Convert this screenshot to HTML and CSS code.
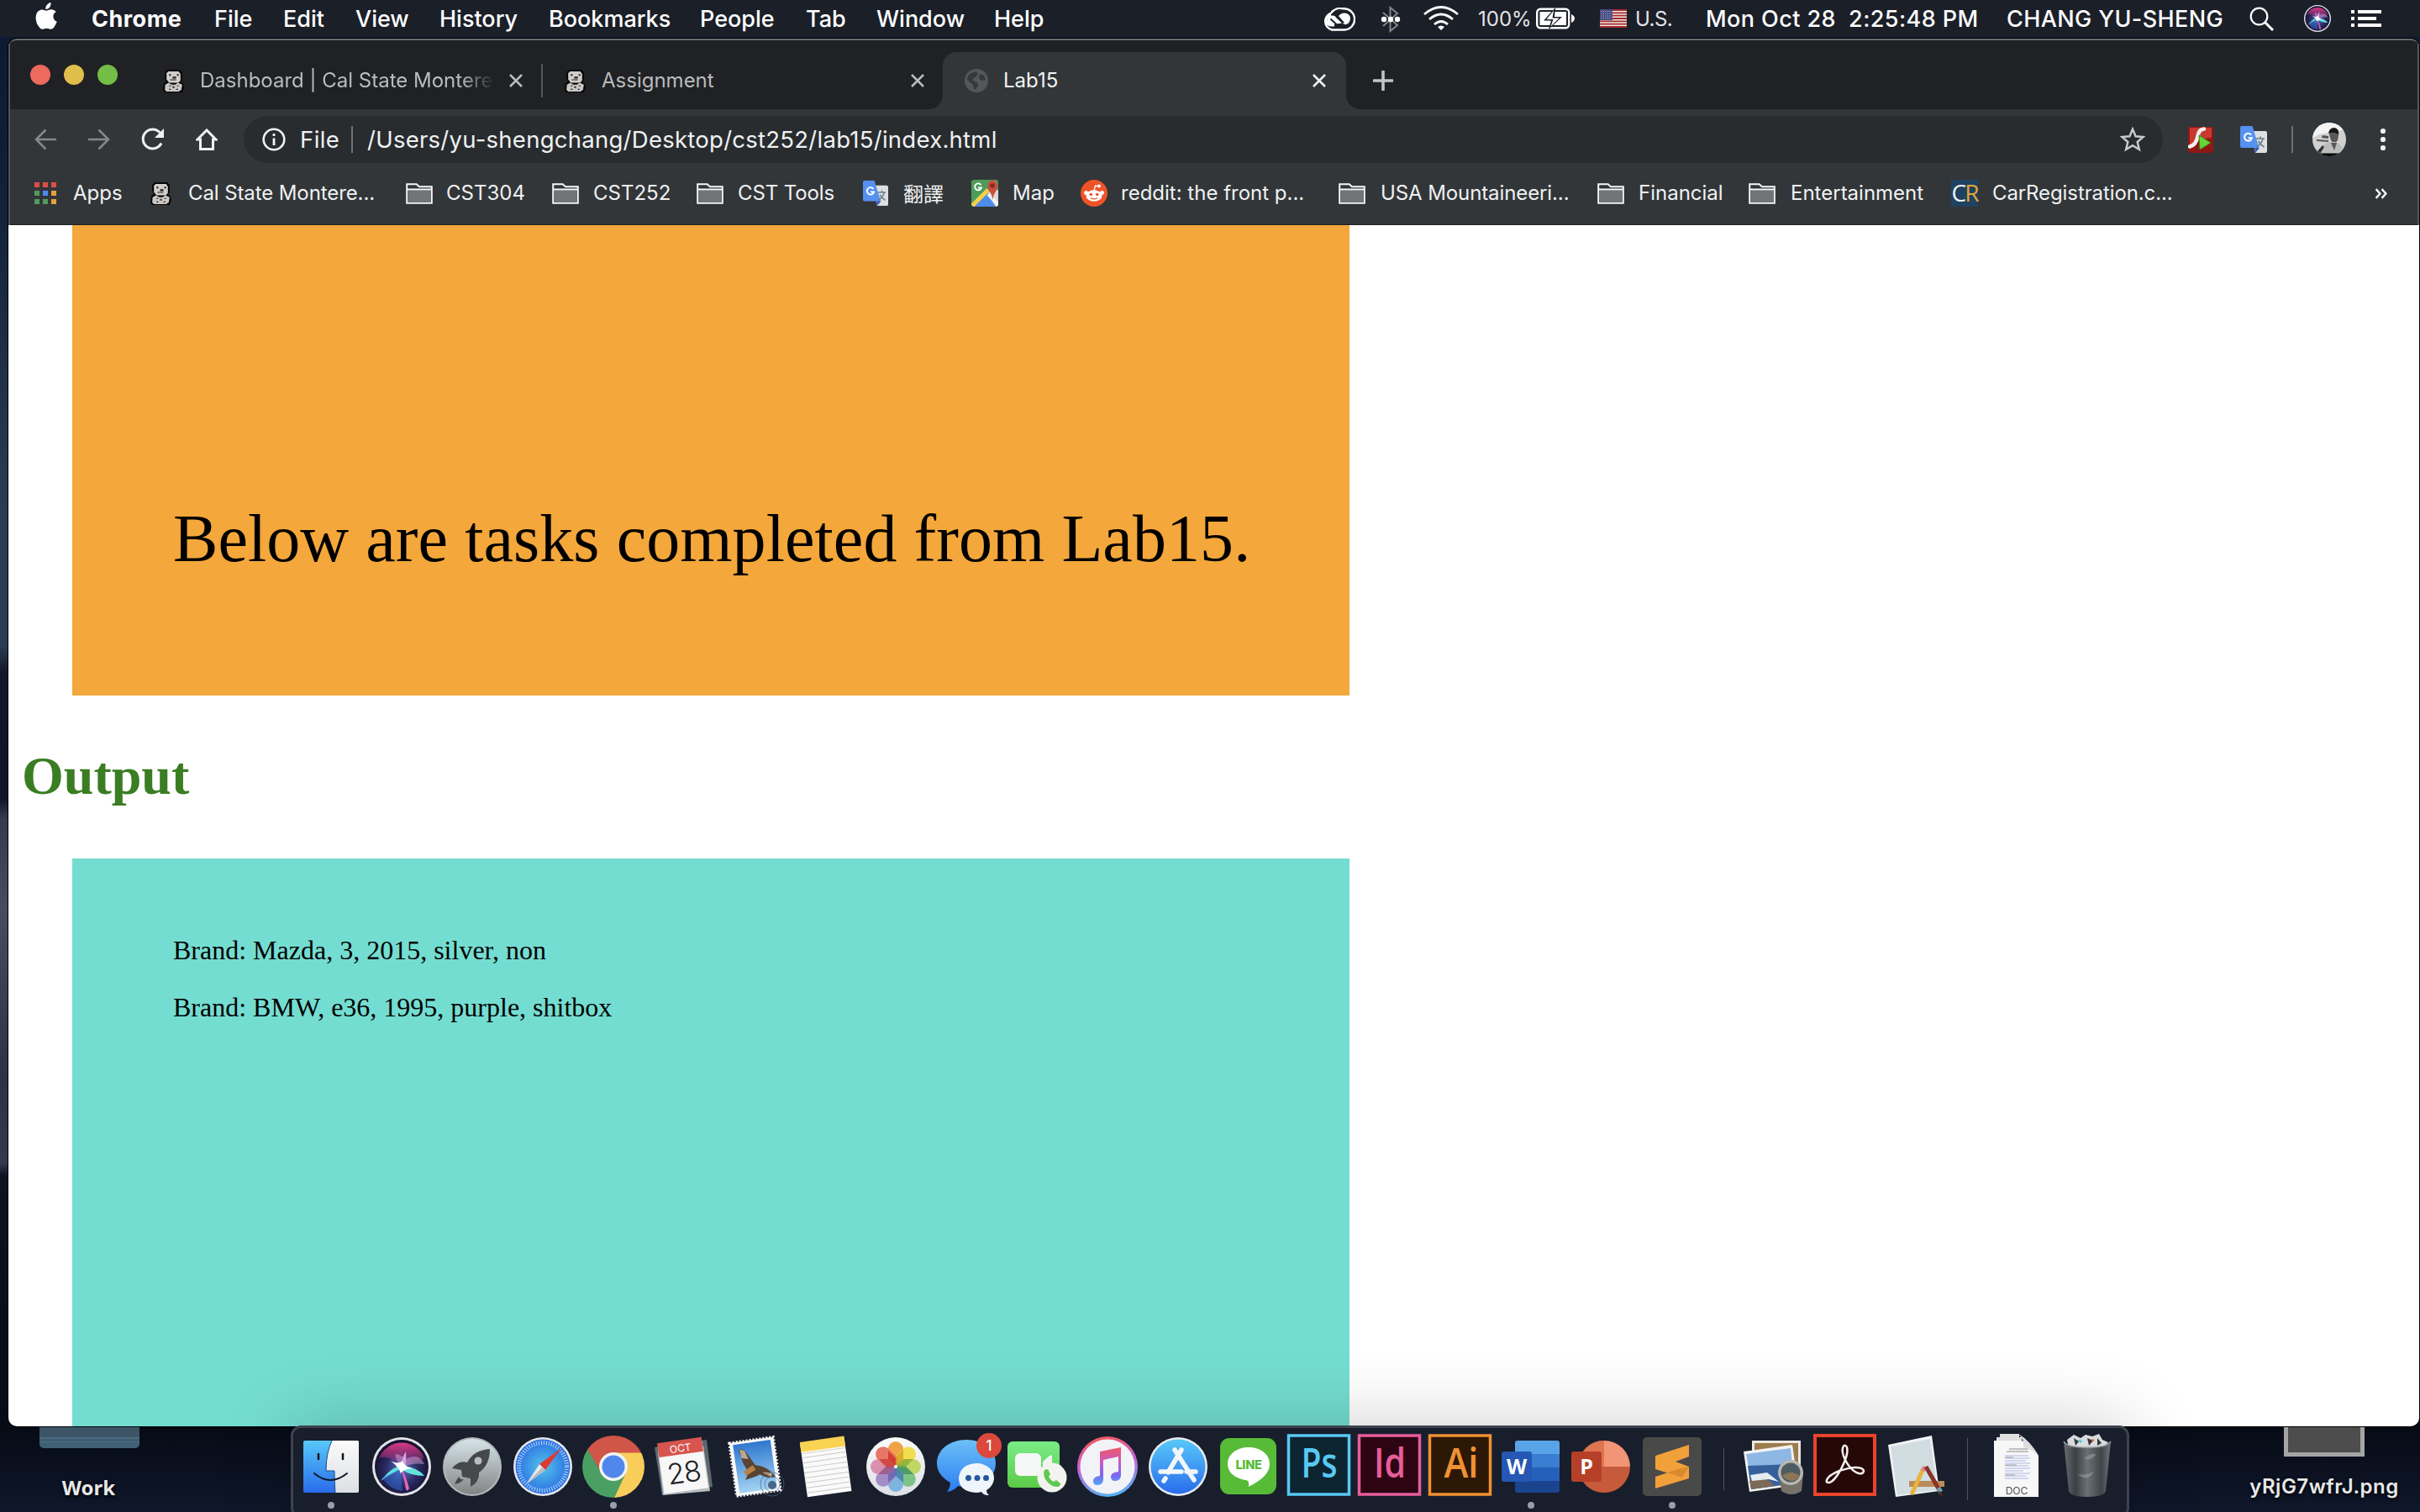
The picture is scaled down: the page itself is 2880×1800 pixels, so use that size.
FILE: index.html
```html
<!DOCTYPE html>
<html lang="en">
<head>
<meta charset="utf-8">
<title>Lab15</title>
<link rel="stylesheet" href="styles.css">
</head>
<body>
<svg class="defs" width="0" height="0" aria-hidden="true">
  <defs>
    <linearGradient id="gBlue" x1="0" y1="0" x2="0" y2="1"><stop offset="0" stop-color="#57c8f8"/><stop offset="1" stop-color="#2a6cec"/></linearGradient>
    <linearGradient id="gBubble" x1="0" y1="0" x2="0" y2="1"><stop offset="0" stop-color="#6cc0f6"/><stop offset="1" stop-color="#2c7df2"/></linearGradient>
    <linearGradient id="gWhite" x1="0" y1="0" x2="0" y2="1"><stop offset="0" stop-color="#fbfbfb"/><stop offset="1" stop-color="#dcdfe4"/></linearGradient>
    <linearGradient id="gGreen" x1="0" y1="0" x2="0" y2="1"><stop offset="0" stop-color="#79ec86"/><stop offset="1" stop-color="#5bcb48"/></linearGradient>
    <linearGradient id="gSilver" x1="0" y1="0" x2="0" y2="1"><stop offset="0" stop-color="#d5e4ea"/><stop offset="1" stop-color="#848484"/></linearGradient>
    <linearGradient id="gSky" x1="0" y1="0" x2="0" y2="1"><stop offset="0" stop-color="#2f78cf"/><stop offset="1" stop-color="#a4d3f3"/></linearGradient>
    <linearGradient id="gNote" x1="0" y1="0" x2="0" y2="1"><stop offset="0" stop-color="#ee5a62"/><stop offset=".4" stop-color="#c65ac8"/><stop offset=".75" stop-color="#7768f2"/><stop offset="1" stop-color="#55a8f5"/></linearGradient>
    <linearGradient id="gRing" x1=".4" y1="0" x2=".6" y2="1"><stop offset="0" stop-color="#f2585c"/><stop offset=".45" stop-color="#c862d8"/><stop offset="1" stop-color="#52b6f5"/></linearGradient>
    <linearGradient id="gTrash" x1="0" y1="0" x2="1" y2="0"><stop offset="0" stop-color="#6f7579"/><stop offset=".25" stop-color="#3d4246"/><stop offset=".5" stop-color="#73787b"/><stop offset=".8" stop-color="#43484c"/><stop offset="1" stop-color="#777c80"/></linearGradient>
    <radialGradient id="gSafari"><stop offset="0" stop-color="#54c3e8"/><stop offset="1" stop-color="#2b70e4"/></radialGradient>
    <radialGradient id="gSiri" cx=".5" cy=".55" r=".55"><stop offset="0" stop-color="#5a6fc0"/><stop offset=".55" stop-color="#2b2a63"/><stop offset="1" stop-color="#120f2b"/></radialGradient>
    <linearGradient id="gPink" x1="0" y1="0" x2="0" y2="1"><stop offset="0" stop-color="#d73a86"/><stop offset="1" stop-color="#d73a86" stop-opacity="0"/></linearGradient>
  </defs>

  <symbol id="otter" viewBox="0 0 24 26">
    <path d="M5 0h14l3 3v9l-2 2 3 2 1 4-2 6H2l-2-3 1-7 3-3-2-3V3z" fill="#050505"/>
    <path d="M6 2h12l2 3v7l-2 3H7l-3-4V4z" fill="#d0cdcb"/>
    <path d="M2.500 17l4-2 3.500 2h4l3-2 5 2-1 6-3 2H4l-2-2z" fill="#c9c6c4"/>
    <path d="M7 5h2v2H7zM16 5h2v2h-2zM11 8h4v2h-4zM8 11h7v1H8zM7 18h2v1H7zM11 19h2v2h-2zM16 18h2v1h-2zM7 22h2v1H7zM15 22h2v1h-2z" fill="#202020"/>
  </symbol>
  <symbol id="folder" viewBox="0 0 32 25">
    <path d="M1.200 23.800V1.200h11.500l3.200 3H30.800v19.600z" fill="#333639" stroke="#f6f6f7" stroke-width="2"/>
    <path d="M2.200 8.500h27.600v14.300H2.200z" fill="#727477"/><path d="M1 7.500h30" stroke="#f6f6f7" stroke-width="1.800"/>
  </symbol>
  <symbol id="translate" viewBox="0 0 32 32">
    <path d="M13 6h17a2 2 0 0 1 2 2v22a2 2 0 0 1-2 2H18z" fill="#dedfe0"/>
    <path d="M18 32l5-6-6-2z" fill="#3656c4"/>
    <path d="M2 0h12.500l8 26H2a2 2 0 0 1-2-2V2a2 2 0 0 1 2-2z" fill="#5690f0"/>
    <path d="M19 15h10M24 12.500v2.500M27 15q-2 7-7.500 10M21.500 18q2 4 7 7" fill="none" stroke="#68838a" stroke-width="1.700"/>
    <path d="M13.300 10.600A4.500 4.500 0 1 0 14 14.200H9.600" fill="none" stroke="#fff" stroke-width="2"/>
  </symbol>
  <symbol id="cross" viewBox="0 0 18 18"><path d="M2 2l14 14M16 2L2 16" stroke="currentColor" stroke-width="2.500"/></symbol>
  <symbol id="siri" viewBox="0 0 70 70">
    <circle cx="35" cy="35" r="35" fill="#e4e3e6"/><circle cx="35" cy="35" r="32" fill="url(#gSiri)"/>
    <path d="M8 25A29 29 0 0 1 62 25Q48 30 35 36Q20 20 8 25z" fill="url(#gPink)"/>
    <path d="M35 37Q18 10 40 26Q56 18 62 32Q46 30 35 37z" fill="#d5a1d8" opacity=".5"/>
    <path d="M10 52Q24 34 36 34Q54 36 62 46Q46 46 34 38Q22 44 10 52z" fill="#62e3dc"/>
    <path d="M34 35Q40 46 44 61Q40 68 39 55z" fill="#ee65b8"/>
    <path d="M36 35Q34 26 40 17Q41 28 39 35z" fill="#d9a2e8"/>
    <path d="M12 48Q20 62 36 64L33 38z" fill="#2f6bd0" opacity=".55"/>
    <path d="M22 28Q31 33 36 28Q38 35 48 37Q37 38 34 43Q32 36 22 28z" fill="#fff"/>
  </symbol>
</svg>

<main class="desktop">
  <header class="menubar">
    <svg class="i-apple" viewBox="0 0 26 32"><path d="M18.500 0q.5 4-1.800 6.200-2 2-4.400 1.800-.3-3.200 1.800-5.500Q16 .4 18.500 0zM24.800 11q-3.500 2-3.400 5.700.2 4.300 4.300 6-1.200 3.800-3.800 7.200-2.200 2.600-5 1.500-3.500-1.500-6.900 0-2.600 1-4.600-1.200Q.3 24.500.6 17.500.9 10.300 6.400 8.700q2.200-.6 4.800.6 1.900.8 3.700 0 6.100-2.500 9.900 1.700z" fill="#fff"/></svg>
    <b class="mb-app">Chrome</b><span>File</span><span>Edit</span><span>View</span><span>History</span><span>Bookmarks</span><span>People</span><span>Tab</span><span>Window</span><span>Help</span>
    <svg class="i-cc" viewBox="0 0 40 28"><path d="M12 26.500A10.500 10.500 0 0 1 11 6.500 14 14 0 0 1 26 1.300 12.500 12.500 0 0 1 27 26.500z" fill="none" stroke="#fff" stroke-width="2.400"/><path d="M11.500 20.500A5.500 5.500 0 0 1 12 9.500q3-.5 5.500 2L25 19q5 3 8-2 3-7-3-10-6-2-10 3l7 8" fill="#fff"/><path d="M10.500 13.500l8 7.500M17 10.500l8.500 8" stroke="#1b1f28" stroke-width="2"/><path d="M11 9a6 6 0 0 0 0 12h4" fill="none" stroke="#fff" stroke-width="3"/></svg>
    <svg class="i-bt" viewBox="0 0 24 32"><path d="M3 8l17 15-8.500 7V2L20 9 3 24" fill="none" stroke="#84868b" stroke-width="2"/><circle cx="4" cy="16" r="3.200" fill="#fff"/><circle cx="12" cy="16" r="3.200" fill="#fff"/><circle cx="20" cy="16" r="3.200" fill="#fff"/></svg>
    <svg class="i-wifi" viewBox="0 0 42 30"><g fill="none" stroke="#fff" stroke-width="2.700"><path d="M1 10Q21-7 41 10M7 16Q21 4 35 16M13 22Q21 15 29 22"/></g><path d="M17 25q4-3 8 0l-4 4z" fill="#fff"/></svg>
    <span class="mb-small">100%</span>
    <svg class="i-batt" viewBox="0 0 46 26"><rect x="1.200" y="1.800" width="38" height="22.400" rx="4" fill="none" stroke="#fff" stroke-width="2.400"/><rect x="4.500" y="5" width="31.500" height="16" fill="#fff"/><path d="M23 0L9 15.500h9L15 26 31 11h-9z" fill="#1b1f28"/><path d="M21 3.500L12.500 14h8L17.500 22.500 27.500 12.500h-8z" fill="#fff"/><path d="M42 8q4 2 4 5t-4 5z" fill="#fff"/></svg>
    <svg class="i-flag" viewBox="0 0 32 22"><path fill="#efe9e9" d="M0 0h32v22H0z"/><path d="M0 1h32M0 4.300h32M0 7.600h32M0 11h32M0 14.300h32M0 17.600h32M0 21h32" stroke="#a52a2b" stroke-width="1.800"/><path fill="#464a80" d="M0 0h15v13H0z"/><path d="M1.500 2.500h13M1.500 5.200h13M1.500 8h13M1.500 10.700h13" stroke="#c9cbe0" stroke-width="1" stroke-dasharray="1 1.500"/></svg>
    <span class="mb-small mb-us">U.S.</span>
    <span class="mb-date">Mon Oct 28&nbsp; 2:25:48 PM</span>
    <span class="mb-user">CHANG YU-SHENG</span>
    <svg class="i-search" viewBox="0 0 30 30"><circle cx="11.500" cy="11.500" r="9.800" fill="none" stroke="#fff" stroke-width="2.200"/><path d="M18.500 18.500L28 28" stroke="#fff" stroke-width="3"/></svg>
    <svg class="i-siri"><use href="#siri"/></svg>
    <svg class="i-list" viewBox="0 0 36 20"><path d="M0 2h4M8 2h28M0 10h4M8 10h22M0 18h4M8 18h28" stroke="#fff" stroke-width="4"/></svg>
  </header>

  <section class="window">
    <div class="chrome">
      <div class="tabstrip">
        <div class="lights"><i class="light red"></i><i class="light yellow"></i><i class="light green"></i></div>
        <div class="tab tab-first"><svg class="fav"><use href="#otter"/></svg><span class="title fade">Dashboard | Cal State Monterey</span><svg class="close"><use href="#cross"/></svg><i class="tabsep"></i></div>
        <div class="tab tab-second"><svg class="fav"><use href="#otter"/></svg><span class="title">Assignment</span><svg class="close"><use href="#cross"/></svg></div>
        <div class="tab tab-active"><svg class="globe" viewBox="0 0 28 28"><circle cx="14" cy="14" r="14" fill="#54565a"/><path d="M8 5q5-3 8 0l-2 4-4 2v3l5 2 1 4-3 5q-3-1-3-6l-5-4-2-3q1-5 5-7zM18 6l5 2 2 5-5 1-3-3z" fill="#36393c"/></svg><span class="title">Lab15</span><svg class="close"><use href="#cross"/></svg></div>
        <svg class="plus" viewBox="0 0 24 24"><path d="M12 1v22M1 12h22" stroke="#c3c4c7" stroke-width="3.600" stroke-linecap="round"/></svg>
      </div>

      <div class="toolbar">
        <svg class="ic26 dim" viewBox="0 0 26 26"><path d="M26 13H2M13.500 1.500L2 13l11.500 11.500" fill="none" stroke="currentColor" stroke-width="2.500"/></svg>
        <svg class="ic26 dim" viewBox="0 0 26 26"><path d="M0 13h24M12.500 1.500L24 13 12.500 24.500" fill="none" stroke="currentColor" stroke-width="2.500"/></svg>
        <svg class="ic28" viewBox="0 0 28 28"><path d="M24 18.500A11.500 11.500 0 1 1 22.500 6" fill="none" stroke="currentColor" stroke-width="3"/><path d="M27 1v11H16z" fill="currentColor"/></svg>
        <svg class="ic26 home" viewBox="0 0 26 26"><path d="M5.500 13v11.500h15V13h3.500L13 2 2 13z" fill="none" stroke="currentColor" stroke-width="3"/></svg>
        <div class="omnibox">
          <svg class="info" viewBox="0 0 28 28"><circle cx="14" cy="14" r="12.300" fill="none" stroke="currentColor" stroke-width="2.600"/><path d="M14 12.500V21M14 7v3" stroke="currentColor" stroke-width="2.800"/></svg>
          <span class="scheme">File</span><i class="omnisep"></i><span class="url">/Users/yu-shengchang/Desktop/cst252/lab15/index.html</span>
          <svg class="star" viewBox="0 0 28 28"><path d="M14 2.500l3.300 8 8.500.7-6.500 5.600 2 8.400-7.300-4.500-7.300 4.500 2-8.400-6.500-5.600 8.500-.7z" fill="none" stroke="#c9cbce" stroke-width="2.300"/></svg>
        </div>
        <svg class="flash" viewBox="0 0 30 31"><rect width="30" height="31" rx="3" fill="#8f1713"/><path d="M2 1h26v12Q12 14 2 24z" fill="#c8382f"/><path d="M19 2.500q-6 0-7.500 8.500-2 11-9.500 12.500" fill="none" stroke="#f4eeee" stroke-width="4.500" stroke-linecap="round"/><path d="M13 10l14 9-13 8z" fill="#66d636" stroke="#338a1b" stroke-width="1"/></svg>
        <svg class="ic32"><use href="#translate"/></svg>
        <i class="barsep"></i>
        <svg class="avatar" viewBox="0 0 40 40"><clipPath id="av"><circle cx="20" cy="20" r="20"/></clipPath><g clip-path="url(#av)"><path fill="#d0d0d0" d="M0 0h40v40H0z"/><path d="M0 0h40v8L8 14 0 18z" fill="#f3f3f3"/><path d="M5 20l14 1v2L5 22zM12 15l7 1v3l-8-1z" fill="#555"/><path d="M20 14q0-7 6-7t5 8l-1 6q-4 6-8 0z" fill="#5b5755"/><path d="M19 13q1-7 7-7 6 1 5 8-6-4-12-1z" fill="#161616"/><path d="M8 38q3-14 14-15h5q9 2 10 15z" fill="#bcbcbc"/><path d="M22 24l4 9 3-9z" fill="#5b5755"/><path d="M6 34l6-7 2 2-5 8z" fill="#333"/><path d="M0 36.500h40V40H0z" fill="#050505"/></g></svg>
        <svg class="dots" viewBox="0 0 10 28"><g fill="#f1f2f3"><circle cx="5" cy="4" r="3.100"/><circle cx="5" cy="14" r="3.100"/><circle cx="5" cy="24" r="3.100"/></g></svg>
      </div>

      <nav class="bookmarks">
        <svg class="apps" viewBox="0 0 26 27"><g><path fill="#dd4f43" d="M0 0h6v6H0zM10 0h6v6h-6zM20 0h6v6h-6z"/><path fill="#539a5e" d="M0 10h6v6H0zM0 20h6v6H0zM10 20h6v6h-6z"/><path fill="#4a8af0" d="M10 10h6v6h-6z"/><path fill="#e5a23a" d="M20 10h6v6h-6zM20 20h6v6h-6z"/></g></svg><span>Apps</span>
        <svg class="fav"><use href="#otter"/></svg><span class="tight">Cal State Montere...</span>
        <svg class="fold"><use href="#folder"/></svg><span>CST304</span>
        <svg class="fold"><use href="#folder"/></svg><span>CST252</span>
        <svg class="fold"><use href="#folder"/></svg><span class="tight">CST Tools</span>
        <svg class="ic30"><use href="#translate"/></svg><span>翻譯</span>
        <svg class="ic32" viewBox="0 0 32 32"><clipPath id="mp"><rect width="32" height="32" rx="3"/></clipPath><g clip-path="url(#mp)"><path fill="#4d9c5b" d="M0 0h32v32H0z"/><path fill="#d9dadb" d="M20 15l12-3v20H22z"/><path fill="#4f8bec" d="M3 32l16-15 10 15z"/><path d="M1 31L20 12" stroke="#f5d04d" stroke-width="5"/><path d="M20 17l12 13" stroke="#f3f3f3" stroke-width="4"/></g><path d="M25 24q0-6-4-11-5-9 4-13 9 4 5 12-4 6-5 12z" fill="#cf4b3e"/><circle cx="25" cy="7" r="2.800" fill="#792f28"/><path d="M11.500 6.200A4 4 0 1 0 12 9.500H8" fill="none" stroke="#fff" stroke-width="1.800"/></svg><span>Map</span>
        <svg class="ic32" viewBox="0 0 32 32"><circle cx="16" cy="16" r="16" fill="#ee5428"/><ellipse cx="16" cy="19" rx="9.500" ry="6.800" fill="#fff"/><circle cx="6.500" cy="15.500" r="2.500" fill="#fff"/><circle cx="25.500" cy="15.500" r="2.500" fill="#fff"/><circle cx="22" cy="7.500" r="2" fill="#fff"/><path d="M16 13l1.500-6 4 1" fill="none" stroke="#fff" stroke-width="1.300"/><circle cx="12.300" cy="17.500" r="1.800" fill="#ee5428"/><circle cx="19.700" cy="17.500" r="1.800" fill="#ee5428"/><path d="M12 21.700q4 2.500 8 0" fill="none" stroke="#ee5428" stroke-width="1.200"/></svg><span>reddit: the front p...</span>
        <svg class="fold"><use href="#folder"/></svg><span class="tight">USA Mountaineeri...</span>
        <svg class="fold"><use href="#folder"/></svg><span>Financial</span>
        <svg class="fold"><use href="#folder"/></svg><span>Entertainment</span>
        <span class="cr"><i>C</i><b>R</b></span><span class="tight">CarRegistration.c...</span>
        <svg class="more" viewBox="0 0 14 12"><path d="M1.500 1l4.500 5-4.500 5M8 1l4.500 5L8 11" fill="none" stroke="#f4f4f5" stroke-width="2.300"/></svg>
      </nav>
    </div>

    <article class="page">
      <div class="intro"><p>Below are tasks completed from Lab15.</p></div>
      <h1>Output</h1>
      <div class="output"><p>Brand: Mazda, 3, 2015, silver, non</p><p>Brand: BMW, e36, 1995, purple, shitbox</p></div>
    </article>
  </section>

  <figure class="file work"><i class="folder-art"></i><figcaption>Work</figcaption></figure>
  <figure class="file png"><i class="thumb-art"></i><figcaption>yRjG7wfrJ.png</figcaption></figure>

  <footer class="dock">
    <svg class="app" viewBox="0 0 84 100"><rect x="9" y="15" width="66" height="62" rx="2" fill="url(#gBlue)"/><path d="M43 15h30q2 0 2 2v58q0 2-2 2H47q-1-12-1-26H36q0-22 7-36z" fill="url(#gWhite)"/><path d="M43 15q-7 15-7 36h10q0 14 1 26" fill="none" stroke="#1c4c80" stroke-width="1"/><path d="M27 31v6M56 31v6" stroke="#111820" stroke-width="2.600" stroke-linecap="round"/><path d="M22 54Q41 70 61 54" fill="none" stroke="#0c1626" stroke-width="2" stroke-linecap="round"/><circle class="dot" cx="42" cy="92" r="4"/></svg>
    <svg class="app" viewBox="0 0 84 100"><use href="#siri" x="7" y="11" width="70" height="70"/></svg>
    <svg class="app" viewBox="0 0 84 100"><circle cx="42" cy="46" r="35" fill="#b3b9bb"/><circle cx="42" cy="46" r="33" fill="url(#gSilver)"/><path d="M63 25Q44 26 36 41Q26 38 18 48L29 50 30 58 40 60 40 70Q51 64 50 53Q63 44 63 25zM26 58Q23 62 21 67Q28 66 32 61Q28 62 26 58z" fill="#45494b"/><circle cx="49" cy="39" r="4.500" fill="#b6bfc2"/></svg>
    <svg class="app" viewBox="0 0 84 100"><circle cx="42" cy="46" r="35" fill="#e7e9eb"/><circle cx="42" cy="46" r="32.500" fill="url(#gSafari)"/><circle cx="42" cy="46" r="28.500" fill="none" stroke="#bfdcf6" stroke-width="5" stroke-dasharray="1 2"/><path d="M64 24L38 43l7 7z" fill="#dd3a31"/><path d="M22 67l16-24 7 7z" fill="#e9eaeb"/><path d="M22 67l19.500-20.500L45 50z" fill="#b9bcc0"/></svg>
    <svg class="app" viewBox="0 0 84 100"><clipPath id="ch"><circle cx="42" cy="46" r="37"/></clipPath><g clip-path="url(#ch)"><path d="M0 0h84v30H42L28 54 0 10z" fill="#cf5648"/><path d="M0 0v100h41L56 54 28 54 11 25z" fill="#4b9f63"/><path d="M84 29.500H42L57 53 40 90h44z" fill="#f9cd5a"/></g><circle cx="42" cy="46" r="17" fill="#f3f3f1"/><circle cx="42" cy="46" r="13.500" fill="#4f87ec"/><circle class="dot" cx="42" cy="92" r="4"/></svg>
    <svg class="app" viewBox="0 0 84 100"><path d="M7 23l62-9 7 56-60 10z" fill="#5d686e"/><path d="M11 30l54-9 8 54-56 5z" fill="#b9bdbf"/><g transform="rotate(-8 42 44)"><path d="M14 18h53v57H14z" fill="#f7f7f7"/><path d="M14 14h53v17H14z" fill="#d6554e"/><text class="cal-m" x="40.500" y="28">OCT</text><text class="cal-d" x="40.500" y="65">28</text></g></svg>
    <svg class="app" viewBox="0 0 84 100"><g transform="rotate(-8 42 46)"><rect x="16" y="14" width="53" height="64" fill="#f8f8f8" stroke="#f8f8f8" stroke-width="3" stroke-dasharray="2 2"/><rect x="20" y="17" width="45" height="58" fill="url(#gSky)"/><path d="M26 23q4-1 8 4l9 17 8 3q9 5 14 14-10 2-18-5l-6 2-12 2 5-8-5-12z" fill="#5a4331"/><path d="M27 23l6 3 3 10-8-2zM50 54l12 2-2 5z" fill="#bba692"/><path d="M28 50l12-6 3 6-12 5z" fill="#b68246"/></g><g fill="none" stroke="#4d6685" opacity=".7"><circle cx="63" cy="67" r="14"/><circle cx="63" cy="67" r="9"/></g><circle cx="63" cy="68" r="5" fill="#486789"/></svg>
    <svg class="app" viewBox="0 0 84 100"><g transform="rotate(-8 42 45)"><path d="M16 15h53v64H16z" fill="#fafafa"/><path d="M16 13h53v12H16z" fill="#f9d252"/><path d="M16 32h53M16 38h53M16 44h53M16 50h53M16 56h53M16 62h53M16 68h53M16 74h53" stroke="#c9c9c9"/><path d="M16 27h53" stroke="#b2a883" stroke-dasharray="1 1"/></g></svg>
    <svg class="app" viewBox="0 0 84 100"><circle cx="42" cy="46" r="35" fill="url(#gWhite)"/><g opacity=".9"><rect x="33" y="16" width="18" height="30" rx="9" fill="#ef9a35"/><rect x="33" y="16" width="18" height="30" rx="9" fill="#f1dc3f" transform="rotate(45 42 46)"/><rect x="33" y="16" width="18" height="30" rx="9" fill="#bdd454" transform="rotate(90 42 46)"/><rect x="33" y="16" width="18" height="30" rx="9" fill="#72bf7c" transform="rotate(135 42 46)"/><rect x="33" y="16" width="18" height="30" rx="9" fill="#73b0df" transform="rotate(180 42 46)"/><rect x="33" y="16" width="18" height="30" rx="9" fill="#9d84c4" transform="rotate(225 42 46)"/><rect x="33" y="16" width="18" height="30" rx="9" fill="#d887aa" transform="rotate(270 42 46)"/><rect x="33" y="16" width="18" height="30" rx="9" fill="#e7695a" transform="rotate(315 42 46)"/></g><g opacity=".75"><path d="M42 46L33 37V27l9 9z" fill="#cf2d1e"/><path d="M42 46V34l9-9v12z" fill="#d99a22"/><path d="M42 46l9-9h12l-9 9z" fill="#8aa92a"/><path d="M42 46h12l9 9H51z" fill="#3e8f56"/><path d="M42 46l9 9v10l-9-8z" fill="#3a7a9a"/><path d="M42 46l-9 9v10l9-8z" fill="#5862ad"/><path d="M42 46H30l-9 9h12z" fill="#8e4f86"/><path d="M42 46l-9-9H22l9 9z" fill="#c83a3e"/></g><circle cx="42" cy="46" r="2" fill="#fff"/></svg>
    <svg class="app" viewBox="0 0 84 100"><path d="M42 14C62 14 77 26 77 42S62 70 42 70q-6 0-10-1-5 6-13 7 4-5 4-11Q7 56 7 42C7 26 22 14 42 14z" fill="url(#gBubble)"/><path d="M54 42c12 0 21 8 21 17 0 7-4 12-9 15 0 3 1 4 3 6-5 0-7-1-9-4q-3 1-6 1-21-1-21-18 2-16 21-17z" fill="#eef5fb"/><g fill="#23599c"><circle cx="44.500" cy="59.500" r="3.500"/><circle cx="55" cy="59.500" r="3.500"/><circle cx="65.500" cy="59.500" r="3.500"/></g><circle cx="69" cy="21" r="15" fill="#dc493c"/><text class="badge" x="69" y="27">1</text></svg>
    <svg class="app" viewBox="0 0 84 100"><rect x="7" y="16" width="62" height="55" rx="6" fill="url(#gGreen)"/><rect x="16" y="30" width="31" height="27" rx="6" fill="#f6f7f7"/><path d="M49 40l8-7q3-2 3 1v24l-11-9z" fill="#f0f2f0"/><circle cx="60" cy="59" r="17.500" fill="#f2f3ef"/><path d="M51 50l4-1 3 6-2 3q2 4 6 6l3-2 5 4q0 4-4 4-8 0-14-9-3-6-1-11z" fill="#5ec84f"/></svg>
    <svg class="app" viewBox="0 0 84 100"><circle cx="42" cy="46" r="36" fill="url(#gRing)"/><circle cx="42" cy="46" r="32.500" fill="#f2f3f7"/><path d="M33 28l25-5v33q0 7-7 7-5 0-5-5t9-6V34l-18 4v23q0 7-7 7-5 0-5-5t8-6z" fill="url(#gNote)"/></svg>
    <svg class="app" viewBox="0 0 84 100"><circle cx="42" cy="46" r="35" fill="#e9ecef"/><circle cx="42" cy="46" r="32.500" fill="url(#gBlue)"/><g stroke="#f2f6fb" stroke-width="5.500" stroke-linecap="round"><path d="M38 26l23 36M46 26L30 53M27 60l-2 3M21 52h25M52 52h11"/></g></svg>
    <svg class="app" viewBox="0 0 84 100"><rect x="8" y="12" width="67" height="67" rx="11" fill="#57bb37"/><path d="M42 23c14 0 25 8 25 20 0 13-14 21-25 27 1-6-1-8-4-8-12-2-21-9-21-19 0-12 11-20 25-20z" fill="#fff"/><text class="line" x="42" y="49">LINE</text></svg>
    <svg class="app" viewBox="0 0 84 100"><path d="M5.500 9h72v70h-72z" fill="#0c2530" stroke="#57c9f3" stroke-width="3.500"/><text class="adobe ps" x="42" y="59" textLength="43" lengthAdjust="spacingAndGlyphs">Ps</text></svg>
    <svg class="app" viewBox="0 0 84 100"><path d="M5.500 9h72v70h-72z" fill="#2d0512" stroke="#e75d9a" stroke-width="3.500"/><text class="adobe id" x="42" y="59" textLength="38" lengthAdjust="spacingAndGlyphs">Id</text></svg>
    <svg class="app" viewBox="0 0 84 100"><path d="M5.500 9h72v70h-72z" fill="#2d1705" stroke="#ee9132" stroke-width="3.500"/><text class="adobe ai" x="43" y="59" textLength="41" lengthAdjust="spacingAndGlyphs">Ai</text></svg>
    <svg class="app" viewBox="0 0 84 100"><clipPath id="wd"><rect x="23" y="15" width="53" height="62" rx="3"/></clipPath><g clip-path="url(#wd)"><path fill="#59a4e8" d="M23 15h53v16H23z"/><path fill="#3b7dd0" d="M23 31h53v16H23z"/><path fill="#2560bb" d="M23 47h53v16H23z"/><path fill="#1b448e" d="M23 63h53v16H23z"/></g><rect x="7" y="28" width="36" height="36" rx="3" fill="#2557b3"/><text class="office" x="25" y="55">W</text><circle class="dot" cx="42" cy="92" r="4"/></svg>
    <svg class="app" viewBox="0 0 84 100"><path d="M45 46V15a31 31 0 1 0 31 31z" fill="#c65b3c"/><path d="M45 46V15a31 31 0 0 0-31 31z" fill="#de7450"/><path d="M45 46V15a31 31 0 0 1 31 31z" fill="#f29476"/><rect x="6" y="28" width="36" height="36" rx="3" fill="#b64027"/><text class="office" x="24" y="55">P</text></svg>
    <svg class="app" viewBox="0 0 84 100"><rect x="7" y="11" width="70" height="70" rx="5" fill="#494949"/><path d="M22 33L62 20v14L46 40l16 6q-3 12-8 13L22 49z" fill="#f2a03a"/><path d="M22 58l27-9 13-3v14L22 72z" fill="#f2a03a"/><path d="M36 53l13-4 13-3-8 13z" fill="#d98a2e"/><circle class="dot" cx="42" cy="92" r="4"/></svg>
    <span class="dsep short"></span>
    <svg class="app" viewBox="0 0 84 100"><path d="M15 15h58v46H15z" fill="#ebe8e2"/><path d="M18 18h52v42H18z" fill="#9b7c4c"/><path d="M5 28l58-8 7 48-58 8z" fill="#f3f3f3"/><path d="M8 31l53-7 2 19-52 4z" fill="#8db7e4"/><path d="M10 45l53-2 3 23-52 7z" fill="#35609b"/><path d="M12 63q20-8 30 6l-28 4z" fill="#7a6a57"/><path d="M13 56l20-3 14 11-12-3-20 2z" fill="#e5ecf0"/><path d="M47 54h29l-2 21q-12 8-24 0z" fill="#777169"/><circle cx="61" cy="53" r="15" fill="#b8b8b3"/><circle cx="61" cy="53" r="11.500" fill="#4f5b62"/><path d="M51 57q10-8 21 0-9 12-21 0z" fill="#8d7658"/></svg>
    <svg class="app" viewBox="0 0 84 100"><path d="M6 9h71v70H6z" fill="#260807" stroke="#e8452b" stroke-width="4"/><path d="M22 65C30 66 47 34 44 23C41 17 35 24 42 38C50 54 63 58 64 51C62 42 28 50 21 60Q18 65 22 65z" fill="none" stroke="#f5f0ef" stroke-width="2.500"/></svg>
    <svg class="app" viewBox="0 0 84 100"><path d="M9 20l52-11 9 66-52 7z" fill="#f1f3f3"/><path d="M12 22l47-9 9 61-48 6z" fill="#d2dde2"/><path d="M34 63h42v7H34z" fill="#b98c59"/><path d="M37 79l14-31" stroke="#e8b33b" stroke-width="5"/><path d="M50 51l3-5" stroke="#d98593" stroke-width="5"/><path d="M54 46l16 28" stroke="#8a3326" stroke-width="5"/><path d="M69 71l3 5" stroke="#6fa0b0" stroke-width="5"/><path d="M71 75l4 7-7-4z" fill="#4d3322"/></svg>
    <span class="dsep"></span>
    <svg class="app" viewBox="0 0 84 100"><path d="M22 7h23v6H22zM18 11h30v6H18z" fill="#dfdfdf"/><path d="M15 15h33q14 6 20 18v49H15z" fill="#f7f7f7"/><path d="M44 7q14 8 24 26-8-8-18-10 2-8-6-16z" fill="#dcdcdc"/><path d="M33 25h22M30 28h26" stroke="#888"/><path d="M28 33h28M28 36h30M28 39h25M28 42h30M28 45h28M28 48h30M28 51h22M28 54h30M28 57h25M28 60h28" stroke="#aab5e5"/><path d="M28 35h10M28 44h14M28 56h12" stroke="#999"/><text class="doc" x="42" y="79">DOC</text></svg>
    <svg class="app" viewBox="0 0 84 100"><path d="M18 14l8-6 8 4 6-4 8 2 8-3 4 7 7 3-6 7H20z" fill="#d7dbdb"/><path d="M26 12l6 4-4 5zM42 12l7 3-5 6zM54 12l5 6-5 3z" fill="#34383b"/><path d="M31 14l5 1-2 3z" fill="#48c5d8"/><path d="M47 13l4 1-3 3z" fill="#dd6b38"/><path d="M14 16q4 7 28 7t28-7l-6 59q-2 7-22 7t-22-7z" fill="url(#gTrash)" opacity=".92"/><path d="M14 16q4 7 28 7t28-7" fill="none" stroke="#a5aaad" stroke-width="1.500"/><path d="M38 36q12-8 14-4-6 8-14 4zM30 55q12 2 20-4-6 14-20 4z" fill="#a4a8aa" opacity=".5"/></svg>
  </footer>
</main>
</body>
</html>
```
FILE: styles.css
```css
* { box-sizing: border-box; }

body { margin: 0; font-family: Inter, "Noto Sans CJK TC", sans-serif; }
i, b { font-style: normal; }
p, h1, figure { margin: 0; }
svg { display: block; flex: none; }
.defs { position: absolute; }

.desktop {
  position: relative;
  width: 2880px;
  height: 1800px;
  overflow: hidden;
  background: linear-gradient(#0c1930 0, #101f38 200px, #2b3b52 600px, #2b3b52 770px, #121829 800px, #10162a 950px, #353b50 975px, #474d60 1080px, #2c3346 1280px, #333a4b 1385px, #0c1322 1400px, #070b16 1700px, #0f172a 1800px);
}

/* menu bar */
.menubar {
  display: grid;
  grid-template-columns: 67px 146px 82px 86px 100px 130px 180px 126px 84px 140px 390px 70px 51px 65px 69px 76px 43px 84px 358px 288px 65px 56px 60px;
  align-items: center;
  height: 44px;
  padding-left: 42px;
  background: #1b1f28;
  color: #fff;
  font-size: 27px;
  font-weight: 500;
  white-space: nowrap;
}
.mb-app { font-weight: 700; letter-spacing: .5px; }
.mb-small { font-size: 24px; font-weight: 400; color: #e3e4e6; }
.mb-us { margin-left: -1px; letter-spacing: -.5px; }
.mb-date { margin-left: -1px; letter-spacing: .42px; }
.mb-user { margin-left: -1px; letter-spacing: .4px; }
.i-apple { width: 26px; height: 32px; margin-top: -6px; }
.i-cc { width: 40px; height: 28px; margin-top: 2px; }
.i-bt { width: 24px; height: 32px; margin-top: 2px; }
.i-wifi { width: 42px; height: 30px; }
.i-batt { width: 46px; height: 26px; }
.i-flag { width: 32px; height: 22px; }
.i-search { width: 30px; height: 30px; margin-top: 1px; }
.i-siri { width: 32px; height: 32px; }
.i-list { width: 36px; height: 20px; }

/* browser window */
.window {
  position: absolute;
  left: 10px;
  top: 46px;
  width: 2869px;
  height: 1652px;
  display: flex;
  flex-direction: column;
  border-top: 2px solid #6a6b6d;
  border-radius: 10px;
  overflow: hidden;
  background: #fff;
  box-shadow: 0 0 0 1px #000;
}
.chrome {
  flex: none;
  height: 220px;
  border: 0 solid #55575a;
  border-width: 0 2px;
  background: #323639;
  color: #f0f1f2;
  box-shadow: inset 0 -1px #1d1f21;
}
.tabstrip {
  display: flex;
  align-items: center;
  height: 82px;
  padding-left: 24px;
  background: #202124;
  color: #b9bbbe;
  font-size: 24px;
}
.lights { display: flex; gap: 16px; }
.light { width: 24px; height: 24px; border-radius: 50%; }
.red { background: #ed6a5e; }
.yellow { background: #dfbe4c; }
.green { background: #72be47; }
.tab {
  position: relative;
  display: flex;
  align-items: center;
  align-self: flex-end;
  height: 68px;
}
.tab-first { width: 468px; margin-left: 38px; padding-left: 16px; }
.tab-second { width: 464px; padding-left: 26px; padding-right: 9px; }
.tab-active {
  width: 480px;
  margin-left: 12px;
  padding: 0 23px 0 26px;
  border-radius: 16px 16px 0 0;
  background: #323639;
  color: #f1f2f3;
}
.tab-active::before, .tab-active::after {
  content: "";
  position: absolute;
  bottom: 0;
  width: 16px;
  height: 16px;
}
.tab-active::before { left: -16px; background: radial-gradient(circle at 0 0, transparent 15.5px, #323639 16px); }
.tab-active::after { right: -16px; background: radial-gradient(circle at 100% 0, transparent 15.5px, #323639 16px); }
.fav { width: 25px; height: 27px; }
.title { margin: -2px 0 0 19px; white-space: nowrap; }
.fade {
  width: 352px;
  overflow: hidden;
  -webkit-mask-image: linear-gradient(90deg, #000 310px, transparent 350px);
  mask-image: linear-gradient(90deg, #000 310px, transparent 350px);
}
.tab .close { width: 18px; height: 18px; margin-left: auto; }
.tab-first .close { margin-left: 15px; }
.tabsep { width: 2px; height: 40px; margin-left: auto; background: #54575a; }
.globe { width: 28px; height: 28px; }
.tab-active .title { margin-left: 18px; }
.plus { width: 24px; height: 24px; margin: 14px 0 0 32px; }

.toolbar {
  display: grid;
  grid-template-columns: 64px 63px 66px 56px 2314px 62px 61px 26px 78px 40px;
  align-items: center;
  height: 72px;
  padding-left: 29px;
}
.ic26 { width: 26px; height: 26px; }
.ic28 { width: 28px; height: 28px; }
.ic30 { width: 30px; height: 30px; }
.ic32 { width: 32px; height: 32px; }
.home { margin-left: -1px; }
.dim { color: #85888b; }
.omnibox {
  display: flex;
  align-items: center;
  width: 2284px;
  height: 56px;
  padding: 0 21px 0 22px;
  border-radius: 28px;
  background: #282c2f;
  font-size: 27.5px;
  white-space: nowrap;
}
.info { width: 28px; height: 28px; }
.scheme { width: 61px; margin-left: 17px; letter-spacing: .4px; }
.omnisep { width: 2px; height: 32px; background: #6e7173; }
.url { margin-left: 17px; letter-spacing: .26px; }
.star { width: 30px; height: 30px; margin-left: auto; }
.flash { width: 30px; height: 31px; }
.barsep { width: 2px; height: 32px; background: #6e7173; }
.avatar { width: 40px; height: 40px; margin-left: -1px; }
.dots { width: 10px; height: 28px; }

.bookmarks {
  display: grid;
  grid-template-columns: 46px 92px 45px 260px 47px 127px 48px 124px 48px 149px 48px 81px 49px 81px 48px 260px 49px 259px 48px 132px 49px 191px 49px 455px 14px;
  align-items: center;
  height: 56px;
  padding-left: 29px;
  font-size: 24px;
  white-space: nowrap;
}
.bookmarks span { margin-top: -2px; }
.bookmarks .tight { letter-spacing: -.1px; }
.apps { width: 26px; height: 27px; }
.fold { width: 32px; height: 25px; margin-left: -1px; }
.more { width: 15px; height: 13px; }
.bookmarks .cr {
  display: flex;
  justify-content: center;
  width: 32px;
  height: 32px;
  margin-top: 0;
  background: #1f4260;
  font: 28px/31px "Open Sans", sans-serif;
  letter-spacing: -2px;
}
.cr b { color: #e6a637; font-weight: 400; }

/* page content */
.page { flex: 1; font-family: "Liberation Serif", serif; color: #000; }
.intro { width: 1520px; height: 560px; margin-left: 76px; padding: 327px 0 0 120px; background: #f4a73b; }
.intro p { font-size: 80px; line-height: 92px; letter-spacing: .07px; white-space: nowrap; }
.page h1 { margin: 59px 0 61px 16px; font-size: 64px; line-height: 74px; color: #3a7d22; }
.output { width: 1520px; height: 680px; margin-left: 76px; padding: 91px 0 0 120px; background: #74ddd1; }
.output p { margin-bottom: 32px; font-size: 32px; line-height: 36px; }

/* desktop items */
.file {
  position: absolute;
  top: 1699px;
  display: flex;
  flex-direction: column;
  align-items: center;
  color: #e8e8e8;
  font: 700 24px/32px "Noto Sans", sans-serif;
  text-shadow: 0 2px 4px #000;
}
.file i { flex: none; }
.work { left: 47px; width: 119px; }
.work figcaption { margin-left: -2px; }
.folder-art { width: 119px; height: 25px; margin-bottom: 31px; border-radius: 0 0 5px 5px; background: linear-gradient(#3b5566 0 12px, #4b6c80 12px 14px, #3f5c70 14px 17px, #4b6c80 17px 18px, #3f6178 18px); }
.png { left: 2666px; width: 200px; font-family: Inter, sans-serif; font-weight: 600; letter-spacing: .5px; }
.thumb-art { width: 96px; height: 35px; margin-bottom: 20px; border: 5px solid #a5a5a5; border-top: 0; background: #4d4d4d; }

/* dock */
.dock {
  position: absolute;
  left: 346px;
  top: 1697px;
  display: flex;
  width: 2188px;
  height: 110px;
  padding: 0 4px;
  border: 3px solid #3d434e;
  border-radius: 12px;
  background: #191e2c;
  box-shadow: 0 0 90px rgba(0, 0, 0, .2);
}
.app { width: 84px; height: 100px; margin-left: -1px; margin-right: 1px; }
.dsep { width: 2px; height: 74px; margin: 12px 18px 0; background: #4d525e; }
.dsep.short { height: 50px; margin: 24px 19px 0 18px; }
.dot { fill: #9a9dac; }
.app text { text-anchor: middle; }
.cal-m { font: 400 12px Inter, sans-serif; fill: #fff; }
.cal-d { font: 300 34px Inter, sans-serif; fill: #222; letter-spacing: -1px; }
.badge { font: 500 17px Inter, sans-serif; fill: #fff; }
.line { font: 800 14.500px Inter, sans-serif; fill: #57bb37; letter-spacing: -.3px; }
.adobe { font: 600 48px "Open Sans", sans-serif; }
.ps { fill: #57c9f3; }
.id { fill: #e75d9a; }
.ai { fill: #ee9132; }
.office { font: 700 25px "Open Sans", sans-serif; fill: #fff; }
.doc { font: 400 12px Inter, sans-serif; fill: #555; }
```
